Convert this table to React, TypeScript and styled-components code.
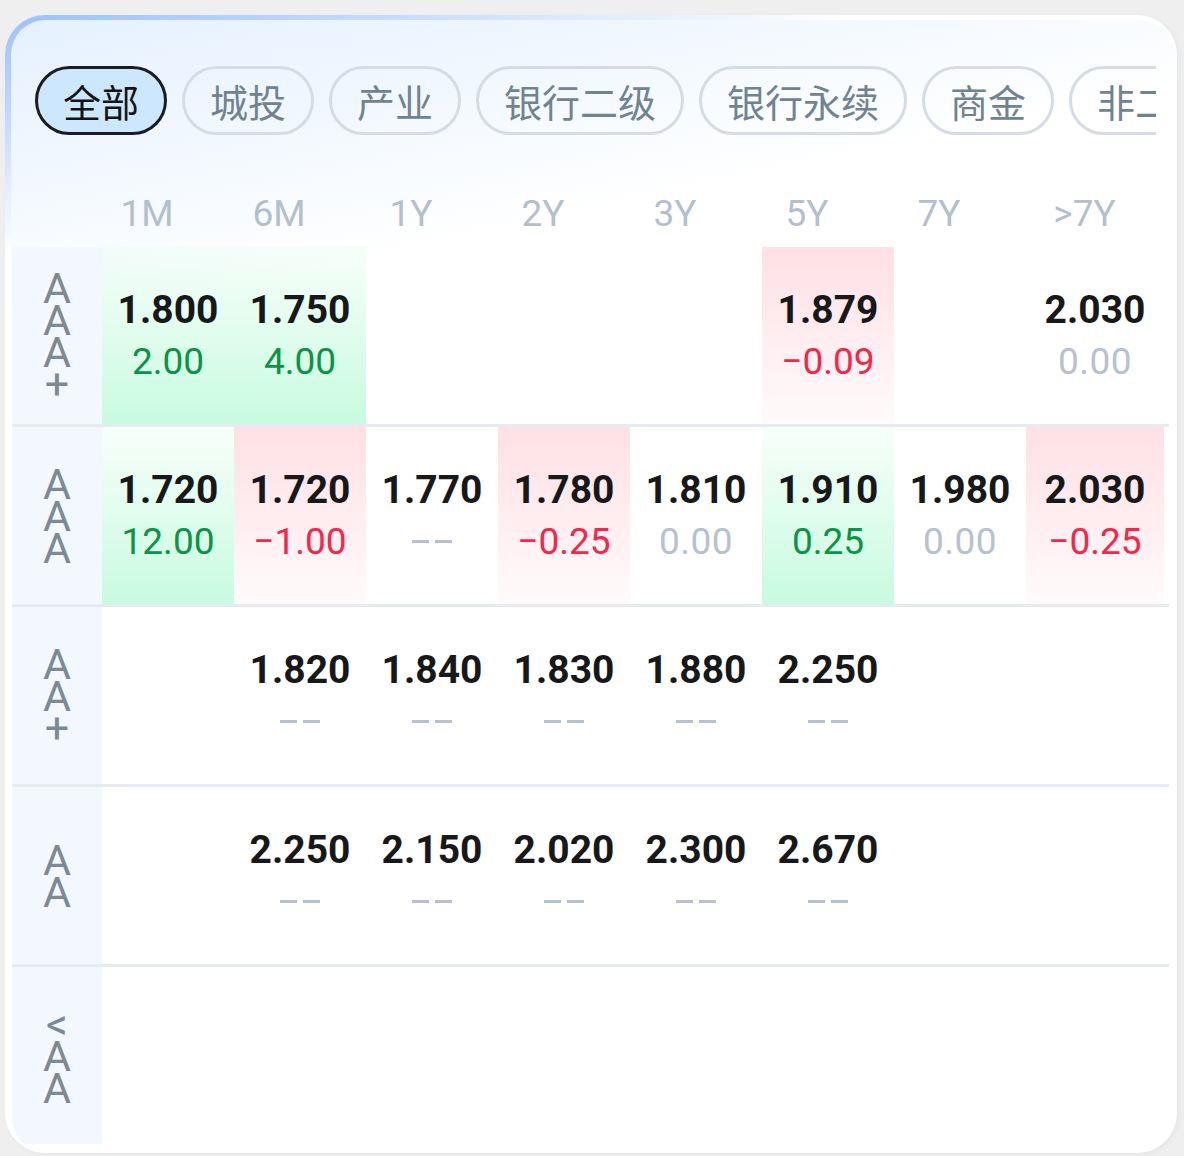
import React from "react";
import styled, { createGlobalStyle, css } from "styled-components";

const GlobalStyle = createGlobalStyle`
  html, body {
    margin: 0;
    padding: 0;
    background: #efefef;
  }
  body {
    font-family: Roboto, "Noto Sans CJK SC", sans-serif;
  }
  * { box-sizing: border-box; }
`;

type Tone = "up" | "down" | "flat";

interface Cell {
  v: string;
  c: string;
  bg?: "up" | "down";
}

interface Row {
  label: string;
  cells: (Cell | null)[];
}

const tabs = ["全部", "城投", "产业", "银行二级", "银行永续", "商金", "非二级"];
const tenors = ["1M", "6M", "1Y", "2Y", "3Y", "5Y", "7Y", ">7Y"];

const rows: Row[] = [
  {
    label: "AAA+",
    cells: [
      { v: "1.800", c: "2.00", bg: "up" },
      { v: "1.750", c: "4.00", bg: "up" },
      null,
      null,
      null,
      { v: "1.879", c: "−0.09", bg: "down" },
      null,
      { v: "2.030", c: "0.00" },
    ],
  },
  {
    label: "AAA",
    cells: [
      { v: "1.720", c: "12.00", bg: "up" },
      { v: "1.720", c: "−1.00", bg: "down" },
      { v: "1.770", c: "−−" },
      { v: "1.780", c: "−0.25", bg: "down" },
      { v: "1.810", c: "0.00" },
      { v: "1.910", c: "0.25", bg: "up" },
      { v: "1.980", c: "0.00" },
      { v: "2.030", c: "−0.25", bg: "down" },
    ],
  },
  {
    label: "AA+",
    cells: [
      null,
      { v: "1.820", c: "−−" },
      { v: "1.840", c: "−−" },
      { v: "1.830", c: "−−" },
      { v: "1.880", c: "−−" },
      { v: "2.250", c: "−−" },
      null,
      null,
    ],
  },
  {
    label: "AA",
    cells: [
      null,
      { v: "2.250", c: "−−" },
      { v: "2.150", c: "−−" },
      { v: "2.020", c: "−−" },
      { v: "2.300", c: "−−" },
      { v: "2.670", c: "−−" },
      null,
      null,
    ],
  },
  {
    label: "<AA",
    cells: [null, null, null, null, null, null, null, null],
  },
];

const toneOf = (c: string): Tone => {
  if (c === "0.00" || c === "−−") return "flat";
  if (c.startsWith("−")) return "down";
  return "up";
};

const Page = styled.div`
  width: 1184px;
  height: 1156px;
  padding: 15px 0 0 5px;
`;

const Card = styled.div`
  width: 1172px;
  height: 1138px;
  border-style: solid;
  border-color: transparent;
  border-width: 5px 0 0 6px;
  border-radius: 40px;
  background:
    linear-gradient(168deg, #e5f1ff 0%, #f2f8ff 12%, #ffffff 23%) padding-box,
    radial-gradient(ellipse 850px 240px at 0 0, #9cc1ff 0%, #c6dbfd 45%, #ffffff 100%) border-box;
  box-shadow: 2px 2px 6px rgba(0, 0, 0, 0.04);
  display: flex;
  flex-direction: column;
  overflow: hidden;
`;

const TabStrip = styled.div`
  margin: 46px 21px 0 24px;
  display: flex;
  gap: 15px;
  overflow: hidden;
  flex-shrink: 0;
`;

const Tab = styled.div<{ $active?: boolean }>`
  flex-shrink: 0;
  height: 69px;
  padding: 0 25px;
  border-radius: 35px;
  border: 3px solid #d5dce5;
  font-family: "Noto Sans CJK SC", sans-serif;
  font-size: 38px;
  line-height: 63px;
  color: #6f8393;
  white-space: nowrap;
  ${(p) =>
    p.$active &&
    css`
      background: #cde7ff;
      border-color: #1b1c1e;
      color: #141414;
    `}
`;

const HeaderRow = styled.div`
  height: 112px;
  margin: 0 8px 0 1px;
  padding: 59px 5px 0 69px;
  display: grid;
  grid-template-columns: repeat(7, 132px) 1fr;
  align-items: start;
`;

const HeaderLabel = styled.div`
  font-family: Roboto, sans-serif;
  font-size: 37px;
  line-height: 40px;
  color: #b4bfce;
  text-align: center;
`;

const Table = styled.div`
  margin: 0 8px 0 1px;
  display: flex;
  flex-direction: column;
`;

const TableRow = styled.div`
  height: 180px;
  display: grid;
  grid-template-columns: 90px repeat(7, 132px) 1fr;
  padding-right: 5px;
  border-bottom: 3px solid #e6ebf1;
  &:last-child {
    border-bottom-color: transparent;
  }
`;

const RatingCell = styled.div`
  background: #f3f8fe;
  display: flex;
  flex-direction: column;
  align-items: center;
  justify-content: center;
`;

const RatingChar = styled.span`
  display: block;
  font-family: Roboto, sans-serif;
  font-size: 43px;
  line-height: 32px;
  height: 32px;
  color: #7c8997;
  text-align: center;
`;

const bgUp = css`
  background: linear-gradient(180deg, rgba(205, 252, 226, 0.15) 0%, #c8fbdf 100%);
`;
const bgDown = css`
  background: linear-gradient(180deg, #ffe0e5 0%, rgba(255, 236, 240, 0.25) 100%);
`;

const DataCell = styled.div<{ $bg?: "up" | "down" }>`
  display: flex;
  flex-direction: column;
  align-items: center;
  justify-content: center;
  gap: 6px;
  ${(p) => (p.$bg === "up" ? bgUp : p.$bg === "down" ? bgDown : "")}
`;

const Value = styled.div`
  font-family: Roboto, sans-serif;
  font-weight: 700;
  font-size: 39px;
  line-height: 46px;
  color: #17181a;
  white-space: nowrap;
`;

const toneColor: Record<Tone, string> = {
  up: "#0a9447",
  down: "#f7254a",
  flat: "#b8c1cf",
};

const Change = styled.div<{ $tone: Tone }>`
  font-family: Roboto, sans-serif;
  font-weight: 400;
  font-size: 37px;
  line-height: 46px;
  color: ${(p) => toneColor[p.$tone]};
  white-space: nowrap;
  letter-spacing: ${(p) => (p.$tone === "flat" ? "0.5px" : "0")};
`;

const Dashes = styled.div`
  display: flex;
  gap: 6px;
  height: 46px;
  align-items: center;
`;

const Dash = styled.span`
  display: block;
  width: 17px;
  height: 3px;
  background: #b8c1cf;
`;

function RatingLabel({ text }: { text: string }) {
  return (
    <RatingCell>
      {Array.from(text).map((ch, i) => (
        <RatingChar key={i}>{ch}</RatingChar>
      ))}
    </RatingCell>
  );
}

function QuoteCell({ cell }: { cell: Cell | null }) {
  if (!cell) return <DataCell />;
  const tone = toneOf(cell.c);
  return (
    <DataCell $bg={cell.bg}>
      <Value>{cell.v}</Value>
      {cell.c === "−−" ? (
        <Dashes aria-label="--">
          <Dash />
          <Dash />
        </Dashes>
      ) : (
        <Change $tone={tone}>{cell.c}</Change>
      )}
    </DataCell>
  );
}

export default function App() {
  return (
    <>
      <GlobalStyle />
      <Page>
        <Card>
          <TabStrip>
            {tabs.map((t, i) => (
              <Tab key={t} $active={i === 0}>
                {t}
              </Tab>
            ))}
          </TabStrip>
          <HeaderRow>
            {tenors.map((t) => (
              <HeaderLabel key={t}>{t}</HeaderLabel>
            ))}
          </HeaderRow>
          <Table>
            {rows.map((r) => (
              <TableRow key={r.label}>
                <RatingLabel text={r.label} />
                {r.cells.map((c, i) => (
                  <QuoteCell key={i} cell={c} />
                ))}
              </TableRow>
            ))}
          </Table>
        </Card>
      </Page>
    </>
  );
}
